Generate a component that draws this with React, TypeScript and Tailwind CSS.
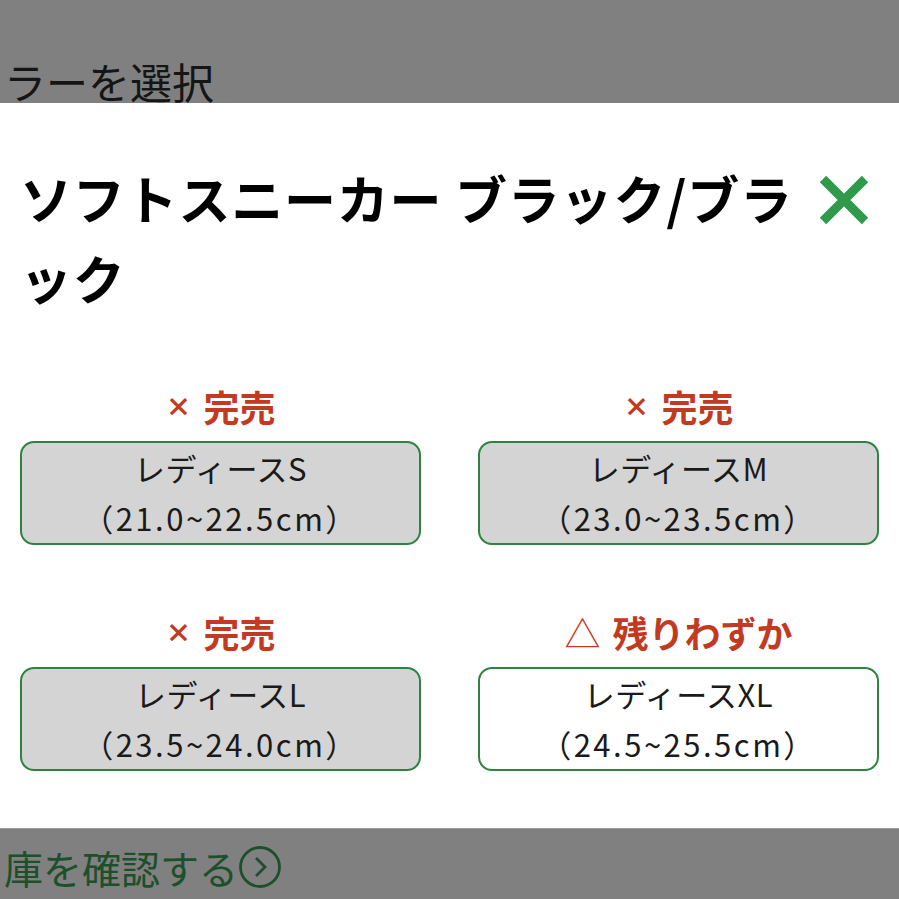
const jp = { fontFamily: '"Noto Sans CJK JP", "Noto Sans", sans-serif' };

type Size = { status: 'soldout' | 'few'; name: string; range: string };

const sizes: Size[] = [
  { status: 'soldout', name: 'レディースS', range: '（21.0~22.5cm）' },
  { status: 'soldout', name: 'レディースM', range: '（23.0~23.5cm）' },
  { status: 'soldout', name: 'レディースL', range: '（23.5~24.0cm）' },
  { status: 'few', name: 'レディースXL', range: '（24.5~25.5cm）' },
];

function CloseIcon() {
  return (
    <svg width="54" height="52" viewBox="0 0 54 52">
      <path d="M6 5 L48 47 M48 5 L6 47" stroke="#2e9a4a" strokeWidth="9" strokeLinecap="butt" />
    </svg>
  );
}

function SizeCell({ item }: { item: Size }) {
  const soldOut = item.status === 'soldout';
  return (
    <div className="flex flex-col items-center">
      <div className="h-[52px] flex items-center text-[#c23a22] font-bold text-[36px] leading-none">
        {soldOut ? (
          <>
            <span className="text-[26px] font-black mr-3">×</span>
            <span>完売</span>
          </>
        ) : (
          <>
            <span className="font-normal text-[36px] mr-3">△</span>
            <span>残りわずか</span>
          </>
        )}
      </div>
      <div
        className={`mt-[9px] w-full h-[104px] rounded-[14px] border-[2.5px] border-[#2e8341] flex flex-col items-center justify-center text-[31px] leading-[50px] text-[#1a1a1a] ${
          soldOut ? 'bg-[#d4d4d4]' : 'bg-white'
        }`}
      >
        <div className="tracking-[0.5px]">{item.name}</div>
        <div className="tracking-[2.5px]">{item.range}</div>
      </div>
    </div>
  );
}

export default function App() {
  return (
    <div className="w-[899px] h-[899px] overflow-hidden flex flex-col bg-[#808080]" style={jp}>
      <div className="h-[103px] overflow-hidden pl-[4px] pt-[51px]">
        <div className="text-[42px] leading-[60px] text-[#151515]">ラーを選択</div>
      </div>

      <div className="h-[725px] bg-white px-5 pt-[55px]">
        <div className="flex items-start">
          <h1 className="flex-1 pr-2 text-[52px] font-bold leading-[80px] tracking-[0.8px] text-black">
            ソフトスニーカー ブラック/ブラック
          </h1>
          <div className="pt-[16px] pr-2">
            <CloseIcon />
          </div>
        </div>

        <div className="mt-[62px] grid grid-cols-2 gap-x-[57px] gap-y-[61px]">
          {sizes.map((s) => (
            <SizeCell key={s.name} item={s} />
          ))}
        </div>
      </div>

      <div className="flex-1 border-t border-[#9a9a9a] flex items-center pl-[4px] pt-[6px]">
        <span className="text-[39px] leading-none text-[#1d4f2c]">庫を確認する</span>
        <svg width="44" height="44" viewBox="0 0 44 44" className="ml-0">
          <circle cx="22" cy="22" r="19.5" fill="none" stroke="#1d4f2c" strokeWidth="2.8" />
          <path d="M18 13 L27 22 L18 31" fill="none" stroke="#1d4f2c" strokeWidth="2.8" />
        </svg>
      </div>
    </div>
  );
}
